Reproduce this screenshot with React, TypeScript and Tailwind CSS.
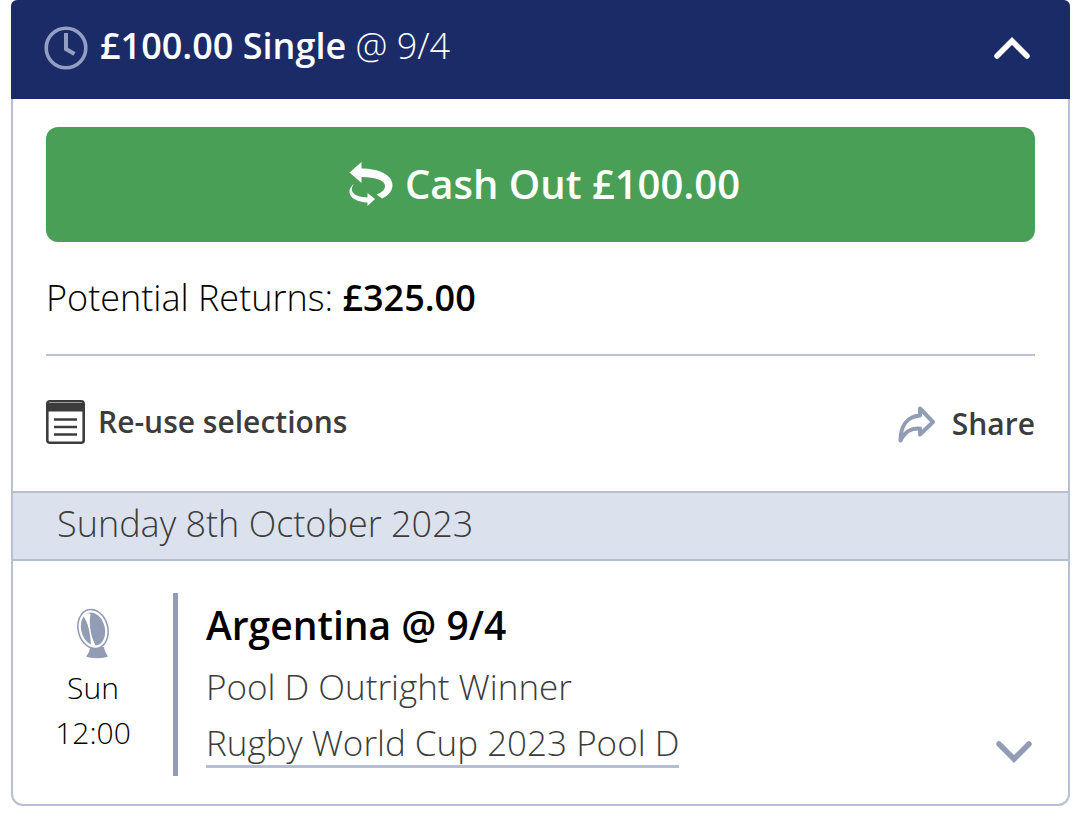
import { useState } from 'react';

interface Bet {
    stake: string;
    type: string;
    odds: string;
    cashOut: string;
    returns: string;
}

interface Selection {
    day: string;
    time: string;
    name: string;
    odds: string;
    market: string;
    event: string;
}

const bet: Bet = { stake: '£100.00', type: 'Single', odds: '9/4', cashOut: '£100.00', returns: '£325.00' };

const selection: Selection = {
    day: 'Sun',
    time: '12:00',
    name: 'Argentina',
    odds: '9/4',
    market: 'Pool D Outright Winner',
    event: 'Rugby World Cup 2023 Pool D',
};

function ClockIcon() {
    return (
        <svg className="w-11 h-11 shrink-0" viewBox="0 0 44 44" fill="none" stroke="#929fc3" aria-hidden="true">
            <circle cx="22" cy="22" r="19.8" strokeWidth="3.6" />
            <path d="M22 7v16l8.5 5" strokeWidth="4" />
        </svg>
    );
}

function ChevronIcon({ up = false }: { up?: boolean }) {
    return (
        <svg className="w-9 h-6" viewBox="0 0 36 24" fill="none" stroke="currentColor" strokeWidth="5.5" strokeLinecap="round" aria-hidden="true">
            <path d={up ? 'M3 20L18 5L33 20' : 'M3 4L18 19L33 4'} />
        </svg>
    );
}

function CashOutIcon() {
    return (
        <svg className="w-11 h-11 shrink-0" viewBox="0 0 44 44" fill="currentColor" aria-hidden="true">
            <path d="M0.5 10.5L12.5 0v6.5C30 6.5 43.5 13 43.5 23c0 6-4 10.5-10.5 13.5L27.5 32.5c5-2 8.5-4.500 8.5-8.500 0-5.500-9-9-23.500-9v6z" />
            <path d="M5 21.500c-3.500 3.500-5 6-4.500 9C1.200 36.500 9 40 18.500 40.500V44l7.500-7-7.500-6v4.500C11 35.300 5 33 3.300 29.500 2.200 27 3 24.500 5 21.500z" />
        </svg>
    );
}

function SlipIcon() {
    return (
        <svg className="w-10 h-11 shrink-0" viewBox="0 0 40 44" fill="none" stroke="#3c3c3c" aria-hidden="true">
            <rect x="1.3" y="1.3" width="36.4" height="41.4" rx="2.5" strokeWidth="2.6" />
            <path d="M1.5 3h36v8.5h-36z" fill="#3c3c3c" stroke="none" />
            <path d="M8 19.5h23M8 27h23M8 34.500h23" strokeWidth="2.4" />
        </svg>
    );
}

function ShareIcon() {
    return (
        <svg className="w-[38px] h-[38px] shrink-0" viewBox="0 0 38 38" fill="none" stroke="#929db5" strokeWidth="4" strokeLinejoin="round" aria-hidden="true">
            <path d="M22 3.5L35 17L22 29.5V23.5C12 23 7 27 2.5 35.5C2.5 21 9 11.5 22 10.5z" />
        </svg>
    );
}

function RugbyIcon() {
    return (
        <svg className="w-9 h-[52px]" viewBox="0 0 36 52" fill="#929db5" aria-hidden="true">
            <path d="M15 40h14c0 3 2 6 4 9.500-5 2.300-17 2.300-22 0 2.500-3 4-6 4-9.500z" />
            <g transform="rotate(-14 18 22)">
                <ellipse cx="18" cy="22" rx="15.600" ry="20.600" />
                <ellipse cx="18" cy="22" rx="14" ry="19" fill="#fff" />
                <ellipse cx="18" cy="22" rx="11.800" ry="16.800" />
            </g>
            <path d="M8 8.500C10.500 6 13 5.500 15.500 7C13.500 18 16 31 21.500 40C19.500 40 17.500 39.500 16 38.500C15.500 26 13 15 8 8.500z" fill="#fff" />
        </svg>
    );
}

export default function App() {
    const [open, setOpen] = useState(true);

    return (
        <main className="pl-[11px] pr-[10px] bg-white font-['Open_Sans',sans-serif] font-light text-4xl text-black">
            <section className="rounded-b-xl">
                <header className="flex items-center justify-between rounded-t-md bg-[#1b2b67] text-white h-[99px] pl-[33px] pr-10 pb-1">
                    <h1 className="flex items-center gap-3">
                        <ClockIcon />
                        <span className="pb-1">
                            <strong className="font-semibold">
                                {bet.stake} {bet.type}
                            </strong>{' '}
                            @ {bet.odds}
                        </span>
                    </h1>
                    <button type="button" aria-label="Toggle bet" aria-expanded={open} onClick={() => setOpen(!open)}>
                        <ChevronIcon up={open} />
                    </button>
                </header>

                {open && (
                    <div className="border-2 border-t-0 border-[#b9bfd2] rounded-b-xl">
                        <div className="px-[33px] pt-7">
                            <button
                                type="button"
                                className="flex w-full h-[115px] items-center justify-center gap-3 rounded-xl bg-[#499f56] pl-2 pb-px text-white text-[40px] font-semibold"
                            >
                                <CashOutIcon />
                                <span>Cash Out {bet.cashOut}</span>
                            </button>

                            <p className="pt-9 pb-9">
                                Potential Returns: <strong className="font-semibold">{bet.returns}</strong>
                            </p>

                            <div className="flex items-center justify-between border-t-2 border-[#b9c1d5] h-[137px] text-[30px] font-semibold text-[#3c3c3c]">
                                <button type="button" className="flex items-center gap-3 pb-1">
                                    <SlipIcon />
                                    Re-use selections
                                </button>
                                <button type="button" className="flex items-center gap-4">
                                    <ShareIcon />
                                    Share
                                </button>
                            </div>
                        </div>

                        <h2 className="flex items-center h-[70px] px-11 pb-1 border-y-2 border-[#b3bdd3] bg-[#dce2ed] text-[#3c3c3c]">
                            Sunday 8th October 2023
                        </h2>

                        <div className="flex pt-8 pb-7 pr-9">
                            <div className="flex w-40 shrink-0 flex-col items-center pt-[14px] text-[30px] leading-[45px]">
                                <RugbyIcon />
                                <span className="pt-[6px]">{selection.day}</span>
                                <time>{selection.time}</time>
                            </div>
                            <div className="flex grow items-end justify-between border-l-[5px] border-[#929db5] pl-7 pb-2 text-[35px] text-[#3c3c3c]">
                                <div className="flex flex-col items-start">
                                    <h3 className="text-[39px] leading-[64px] font-semibold text-black">
                                        {selection.name} @ {selection.odds}
                                    </h3>
                                    <p className="leading-[60px]">{selection.market}</p>
                                    <a href="#event" className="border-b-[3px] border-[#b3bdd3] pt-[6px] pb-[2px] leading-[40px]">
                                        {selection.event}
                                    </a>
                                </div>
                                <button type="button" aria-label="Show details" className="pb-1 text-[#929db5]">
                                    <ChevronIcon />
                                </button>
                            </div>
                        </div>
                    </div>
                )}
            </section>
        </main>
    );
}
